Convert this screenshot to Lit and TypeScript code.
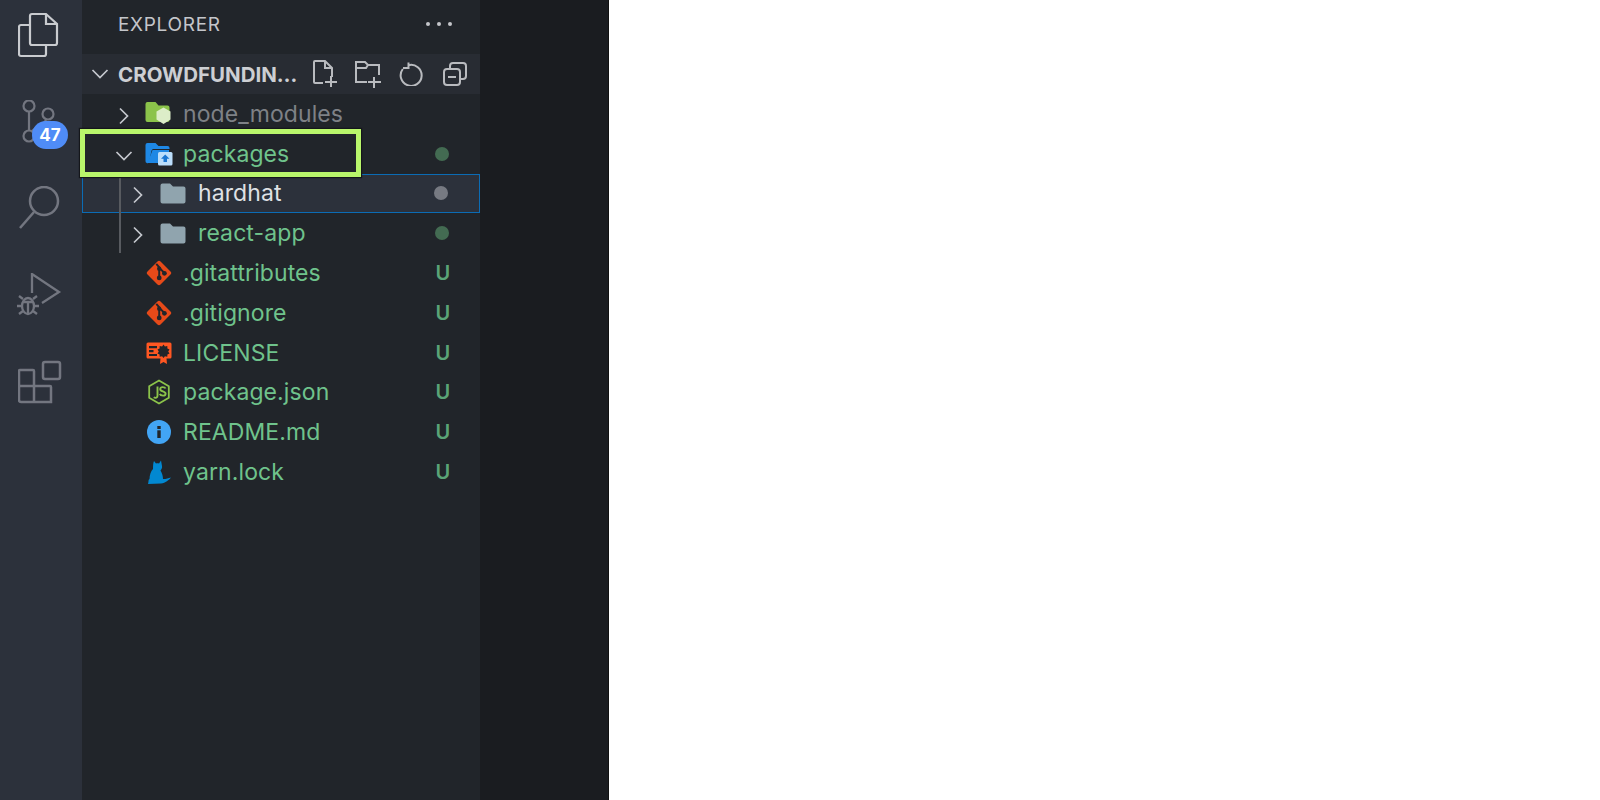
import { LitElement, html, css, svg } from "lit";
import { customElement } from "lit/decorators.js";

const chev = (open: boolean) => html`<svg class="chev" viewBox="0 0 20 20" width="20" height="20" fill="none" stroke="#c5c8ce" stroke-width="1.7">${open ? svg`<path d="M2.500 6 L10 13.500 L17.500 6"/>` : svg`<path d="M6 2.500 L13.500 10 L6 17.500"/>`}</svg>`;

const greyFolder = html`<svg viewBox="0 0 26 22" width="26" height="22"><path d="M2.500 1.500h7.500l3 3h10.500a2 2 0 0 1 2 2v13a2 2 0 0 1-2 2H2.500a2 2 0 0 1-2-2V3.500a2 2 0 0 1 2-2z" fill="#90a4ae"/></svg>`;

const nodeFolder = html`<svg viewBox="0 0 28 26" width="28" height="26"><path d="M2.500 1h8l3 3.500h9a2 2 0 0 1 2 2V19a2 2 0 0 1-2 2H2.500a2 2 0 0 1-2-2V3a2 2 0 0 1 2-2z" fill="#8bc34a"/><path d="M18.500 6.500l7 4v8l-7 4.500-7-4.500v-8z" fill="#dcedc8"/></svg>`;

const pkgFolder = html`<svg viewBox="0 0 28 24" width="28" height="24"><path d="M2.500 1h8l3 3h9a2 2 0 0 1 2 2v1H8.500a2 2 0 0 0-2 1.700L4 20.500a2 2 0 0 1-3.500-1.500V3a2 2 0 0 1 2-2z" fill="#1e88e5"/><path d="M7.500 8H24v13H2.500z" fill="#1e88e5"/><rect x="13" y="10" width="14.500" height="13.500" rx="1.500" fill="#bbdefb"/><path d="M20.200 12.500l4.300 4.200h-2.500V20h-3.500v-3.300h-2.500z" fill="#1976d2"/></svg>`;

const gitIcon = html`<svg viewBox="0 0 24 24" width="26" height="26"><rect x="3.500" y="3.500" width="17" height="17" rx="2" transform="rotate(45 12 12)" fill="#e64a19" /><g stroke="#21252a" stroke-width="1.800" fill="none"><path d="M9.500 3.500l3 3.500M12.200 8v8M13 8l4 4"/></g><circle cx="12.200" cy="8" r="2" fill="#21252a"/><circle cx="12.200" cy="16.500" r="2.200" fill="#21252a"/><circle cx="17" cy="12.300" r="2.200" fill="#21252a"/></svg>`;

const licenseIcon = html`<svg viewBox="0 0 26 24" width="26" height="24"><path d="M2 1.500h22a1.500 1.500 0 0 1 1.500 1.500v13a1.500 1.500 0 0 1-1.500 1.500h-3.500l.5 5.500-3.500-2-3.500 2 .5-5.500H2A1.500 1.500 0 0 1 .5 16V3A1.500 1.500 0 0 1 2 1.500z" fill="#ff5722"/><path d="M3 5h8v2.300H3zM3 9h4.500v2.300H3zM3 13h8v2H3z" fill="#21252a"/><path d="M17.500 3.500l1.400 2.100 2.400-.6.100 2.400 2.100 1-1.300 2 1.300 2-2.100 1-.1 2.300-2.400-.5-1.400 1.800-1.400-1.800-2.400.5-.1-2.300-2.100-1 1.300-2-1.300-2 2.100-1 .1-2.400 2.400.6z" fill="#21252a"/></svg>`;

const nodeIcon = html`<svg viewBox="0 0 24 26" width="24" height="26" fill="none"><path d="M12 1.500l9.800 5.700v11.600L12 24.500 2.200 18.800V7.200z" stroke="#8bc34a" stroke-width="1.800"/><path d="M10.500 7.500v9.200c0 2-2 2.800-3.800 1.600" stroke="#8bc34a" stroke-width="1.900"/><path d="M18.500 9.500c-.6-1.500-5-2.300-5.300.5-.3 2.800 5.600 1.900 5.400 4.700-.1 2.700-5 2.400-5.800.2" stroke="#8bc34a" stroke-width="1.900"/></svg>`;

const infoIcon = html`<svg viewBox="0 0 24 24" width="24" height="24"><circle cx="12" cy="12" r="12" fill="#42a5f5"/><rect x="10.300" y="10.300" width="3.400" height="7.700" fill="#21252a"/><rect x="10.300" y="6" width="3.400" height="3" fill="#21252a"/></svg>`;

const yarnIcon = html`<svg viewBox="0 0 24 24" width="24" height="24"><path d="M7 1L9 3.500C10 3 11 3 12 3.500L14 .5L15 6C15.500 8 14 9.500 13.500 10.500C15 13 16 16 16 19C18 19.500 21 18 24 17.500C22 20 18.500 23 14 23.500L1 24C2 21 1 20 2.500 19C2.500 15 4 11 6 9C6 6 6 3 7 1z" fill="#0288d1"/></svg>`;

interface Row { name: string; icon: unknown; color: string; depth: number; chev?: "open" | "closed"; mark?: string; dot?: string; selected?: boolean; }

const rows: Row[] = [
  { name: "node_modules", icon: nodeFolder, color: "#7e8186", depth: 0, chev: "closed" },
  { name: "packages", icon: pkgFolder, color: "#6fc38c", depth: 0, chev: "open", dot: "#436b52" },
  { name: "hardhat", icon: greyFolder, color: "#dfe1e5", depth: 1, chev: "closed", dot: "#777a82", selected: true },
  { name: "react-app", icon: greyFolder, color: "#6fc38c", depth: 1, chev: "closed", dot: "#436b52" },
  { name: ".gitattributes", icon: gitIcon, color: "#6fc38c", depth: 0, mark: "U" },
  { name: ".gitignore", icon: gitIcon, color: "#6fc38c", depth: 0, mark: "U" },
  { name: "LICENSE", icon: licenseIcon, color: "#6fc38c", depth: 0, mark: "U" },
  { name: "package.json", icon: nodeIcon, color: "#6fc38c", depth: 0, mark: "U" },
  { name: "README.md", icon: infoIcon, color: "#6fc38c", depth: 0, mark: "U" },
  { name: "yarn.lock", icon: yarnIcon, color: "#6fc38c", depth: 0, mark: "U" },
];

@customElement("app-root")
export class AppRoot extends LitElement {
  static styles = css`
    :host { display: block; width: 1600px; height: 800px; background: #fff; overflow: hidden; position: relative; font-family: Inter, "Noto Sans", sans-serif; }
    .win { display: flex; width: 609px; height: 800px; }
    .activity { width: 82px; flex: none; background: #2c313b; display: flex; flex-direction: column; align-items: center; padding-top: 12px; box-sizing: border-box; }
    .act { height: 87px; width: 82px; display: flex; justify-content: center; align-items: flex-start; position: relative; }
    .badge { position: absolute; left: 32px; top: 22px; width: 36px; height: 28px; border-radius: 14px; background: #4f8cf7; color: #fff; font-size: 17px; font-weight: 700; display: flex; align-items: center; justify-content: center; }
    .side { width: 398px; flex: none; background: #21252a; display: flex; flex-direction: column; }
    .title { height: 54px; display: flex; align-items: center; justify-content: space-between; padding: 0 28px 6px 36px; box-sizing: border-box; color: #c4c6ca; font-size: 19px; letter-spacing: 0.700px; }
    .dots { display: flex; gap: 7px; }
    .dots i { width: 4px; height: 4px; border-radius: 50%; background: #c4c6ca; display: block; }
    .head { height: 40px; background: #282c33; display: flex; align-items: center; padding-left: 8px; color: #cdcfd3; font-weight: 700; font-size: 20.500px; }
    .head .chev { margin-right: 8px; }
    .head .name { width: 180px; white-space: nowrap; flex: none; }
    .tools { display: flex; align-items: center; margin-left: 14px; gap: 16px; }
    .tools .last { margin-left: 4px; }
    .tree { position: relative; }
    .row { height: 39.800px; display: flex; align-items: center; position: relative; box-sizing: border-box; font-size: 23px; letter-spacing: 0.100px; padding-left: 32px; }
    .row.d1 { padding-left: 46px; }
    .row.sel { background: #2c313b; border: 1.500px solid #0b6cb5; border-left-width: 1px; padding-left: 45px; }
    .chevbox { width: 20px; height: 20px; flex: none; }
    .ic { width: 30px; height: 28px; margin-left: 10px; display: flex; align-items: center; justify-content: center; flex: none; }
    .nm { margin-left: 9px; white-space: nowrap; }
    .d1 .nm { margin-left: 10px; }
    .status { position: absolute; right: 27px; top: 0; bottom: 0; width: 22px; display: flex; align-items: center; justify-content: center; }
    .dot { width: 14px; height: 14px; border-radius: 50%; }
    .u { color: #5aa478; font-weight: 600; font-size: 20px; margin-left: 2px; }
    .guide { position: absolute; left: 37px; top: 80px; width: 1.500px; height: 79px; background: #585b60; }
    .editor { flex: 1; background: #1a1c20; border-right: 1px solid #111; }
    .mark { position: absolute; left: 80px; top: 129px; width: 281px; height: 48px; box-sizing: border-box; border: 5px solid #b9f66b; box-shadow: 0 0 1px 1px #14161a; pointer-events: none; }
  `;

  render() {
    return html`<div class="win">
      <div class="activity">
        <div class="act"><svg width="46" height="46" viewBox="0 0 46 46" fill="none" stroke="#c9cbcf" stroke-width="2.200"><path d="M14 2h14l11 10v19a2 2 0 0 1-2 2H14a2 2 0 0 1-2-2V4a2 2 0 0 1 2-2z"/><path d="M28 2v10h11"/><path d="M12 13H3a2 2 0 0 0-2 2v27a2 2 0 0 0 2 2h23a2 2 0 0 0 2-2v-9"/></svg></div>
        <div class="act"><svg width="46" height="46" viewBox="0 0 46 46" fill="none" stroke="#737680" stroke-width="2.200" style="margin-top:1px"><circle cx="11" cy="6" r="5.500"/><circle cx="30" cy="14" r="5.500"/><circle cx="11" cy="36" r="5.500"/><path d="M11 12v18M28 20c-2 5-9 6-14 11"/></svg><span class="badge">47</span></div>
        <div class="act"><svg width="46" height="46" viewBox="0 0 46 46" fill="none" stroke="#737680" stroke-width="2.500"><circle cx="26" cy="15" r="14"/><path d="M16 26 L2 42"/></svg></div>
        <div class="act"><svg width="48" height="46" viewBox="0 0 48 46" fill="none" stroke="#737680" stroke-width="2.300"><path d="M15 20V1l27 18-17 11"/><ellipse cx="11" cy="33" rx="6" ry="8"/><path d="M6 29h10M11 29v12M6 26l-4-3M16 26l4-3M5 33H0M17 33h5M6 38l-4 3M16 38l4 3"/></svg></div>
        <div class="act"><svg width="46" height="46" viewBox="0 0 46 46" fill="none" stroke="#737680" stroke-width="2.500"><rect x="25" y="2" width="17" height="17" rx="2"/><path d="M3 10h12a1 1 0 0 1 1 1v15h16a1 1 0 0 1 1 1v15H3a2 2 0 0 1-2-2V11a1 1 0 0 1 1-1zM1 26h15v16"/></svg></div>
      </div>
      <div class="side">
        <div class="title"><span>EXPLORER</span><span class="dots"><i></i><i></i><i></i></span></div>
        <div class="head">
          ${chev(true)}
          <span class="name">CROWDFUNDIN…</span>
          <span class="tools">
            <svg width="26" height="28" viewBox="0 0 26 28" fill="none" stroke="#b9bbbf" stroke-width="2"><path d="M11 23H3a1 1 0 0 1-1-1V2a1 1 0 0 1 1-1h10l7 7v9M13 1v7h7M19 16v11M13 22h12"/></svg>
            <svg width="29" height="30" viewBox="0 0 29 30" fill="none" stroke="#b9bbbf" stroke-width="2"><path d="M13 23H2V3h9l3 3h11v10M2 9h10l2-3M20 18v11M14 23h13"/></svg>
            <svg width="24" height="24" viewBox="0 0 24 24" fill="none" stroke="#b9bbbf" stroke-width="2"><path d="M9.500 3.200A10.500 10.500 0 1 1 3.800 7M9.500 .5v5.500H4"/></svg>
            <svg class="last" width="24" height="24" viewBox="0 0 24 24" fill="none" stroke="#b9bbbf" stroke-width="2"><rect x="1" y="7" width="16" height="16" rx="3"/><path d="M7 7V4a3 3 0 0 1 3-3h10a3 3 0 0 1 3 3v10a3 3 0 0 1-3 3h-3M5 15h8"/></svg>
          </span>
        </div>
        <div class="tree">
          ${rows.map((r) => html`<div class="row ${r.depth ? "d1" : ""} ${r.selected ? "sel" : ""}" style="color:${r.color}">
            <span class="chevbox">${r.chev ? chev(r.chev === "open") : ""}</span>
            <span class="ic">${r.icon}</span>
            <span class="nm">${r.name}</span>
            <span class="status">${r.dot ? html`<span class="dot" style="background:${r.dot}"></span>` : ""}${r.mark ? html`<span class="u">${r.mark}</span>` : ""}</span>
          </div>`)}
          <div class="guide"></div>
        </div>
      </div>
      <div class="editor"></div>
    </div>
    <div class="mark"></div>`;
  }
}
